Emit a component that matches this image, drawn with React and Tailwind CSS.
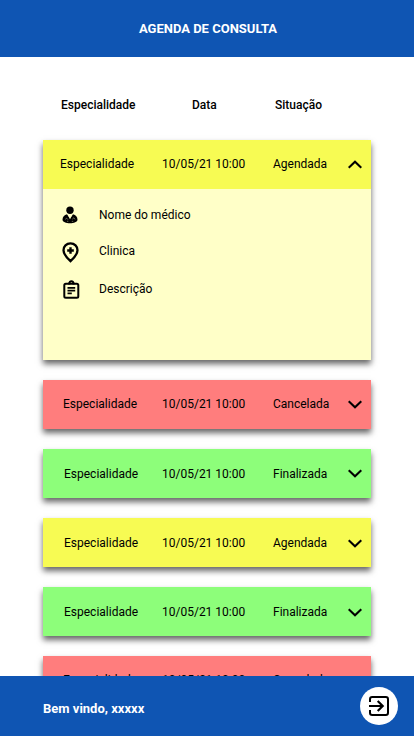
const tones = {
  yellow: "bg-[#f7fb53]",
  red: "bg-[#ff7d7d]",
  green: "bg-[#8dfe7a]",
};

const appointments = [
  { status: "Agendada", tone: "yellow", pad: "pl-[17px] pb-0.5", date: "10/05/21 10:00", chevron: "mt-0.5", open: true },
  { status: "Cancelada", tone: "red", pad: "pl-5 pb-0.5", date: "10/05/21 10:00", chevron: "mt-0.5" },
  { status: "Finalizada", tone: "green", pad: "pl-[21px]", date: "10/05/21 10:00", chevron: "mb-px" },
  { status: "Agendada", tone: "yellow", pad: "pl-[21px]", date: "10/05/21 10:00", chevron: "mt-px" },
  { status: "Finalizada", tone: "green", pad: "pl-[21px]", date: "10/05/21 10:00", chevron: "mt-px" },
  { status: "Cancelada", tone: "red", pad: "pl-5 pb-0.5", date: "10/05/21 10:00", chevron: "mt-1" },
];

function Chevron({ up, className = "" }) {
  return (
    <svg width="14" height="9" viewBox="0 0 14 9" fill="none" stroke="#000" strokeWidth="2.1" className={"shrink-0 " + className}>
      <path d={up ? "M0.7 7.8L7 1.7L13.3 7.8" : "M0.7 1.2L7 7.3L13.3 1.2"} />
    </svg>
  );
}

function DoctorIcon() {
  return (
    <svg width="16" height="18" viewBox="0 0 16 18">
      <circle cx="8" cy="4.2" r="3.7" fill="#000" />
      <path d="M5 8.3C2.200 9.200.5 11 .5 13.800c0 2.300 3.600 3.500 7.500 3.500s7.500-1.200 7.500-3.500c0-2.800-1.700-4.600-4.500-5.500L8 12.500Z" fill="#000" />
      <path d="M5.600 8.400L8 13.200L10.400 8.400L8.900 9.300L8.500 11.200H7.500L7.100 9.300Z" fill="#ffffc8" />
      <path d="M3.200 13.400l1.500-1.200 1.300 1.500M10.300 13.200l1.500-1.400 1.200 1.600M5 15.300h1.300M9.800 15.400h1.400" stroke="#ffffc8" strokeWidth=".4" fill="none" />
    </svg>
  );
}

function ClinicIcon() {
  return (
    <svg width="17" height="21" viewBox="0 0 17 21" fill="none" stroke="#000" strokeWidth="2.3">
      <path d="M8.500 1.400C4.400 1.400 1.500 4.400 1.500 8.200c0 4.200 3.200 7.500 7 11 3.800-3.500 7-6.800 7-11 0-3.800-2.900-6.800-7-6.800Z" />
      <path d="M8.500 5.200v6.600M5.200 8.500h6.600" strokeWidth="2.400" />
    </svg>
  );
}

function ClipboardIcon() {
  return (
    <svg width="17" height="19" viewBox="0 0 17 19" fill="none" stroke="#000" strokeWidth="2" className="ml-px">
      <rect x="1.300" y="3.800" width="14" height="14" rx="1.500" />
      <path d="M5.200 3.400h1.200c.1-1.300.9-2.100 2-2.100s1.900.8 2 2.100h1.200" />
      <path d="M4.500 7.800h7.700M4.500 10.600h7.700M4.500 13.400h4.300" strokeWidth="1.700" />
    </svg>
  );
}

function ExitIcon() {
  return (
    <svg width="20" height="20" viewBox="0 0 20 20" fill="none" stroke="#000" strokeWidth="2">
      <path d="M1 6V3.200Q1 1 3.200 1H16.800Q19 1 19 3.200V16.800Q19 19 16.800 19H3.200Q1 19 1 16.800V14" />
      <path d="M0 10H13.500M8.700 5L13.700 10L8.700 15" strokeWidth="2.200" />
    </svg>
  );
}

function Detail({ icon, children, className, label = "" }) {
  return (
    <div className={"flex items-center " + className}>
      <div className="flex w-[37px] shrink-0">{icon}</div>
      <span className={label}>{children}</span>
    </div>
  );
}

function Card({ item }) {
  return (
    <article className="w-[328px] shrink-0 shadow-[0_4px_6px_rgba(0,0,0,0.6)]">
      <div className={"flex h-[49px] items-center pr-[9px] " + item.pad + " " + tones[item.tone]}>
        <span className="flex-1">Especialidade</span>
        <span className="w-[111px]">{item.date}</span>
        <span className="w-[75px]">{item.status}</span>
        <Chevron up={item.open} className={item.chevron} />
      </div>
      {item.open && (
        <div className="h-[171px] bg-[#ffffc8] pl-[19px] pt-4">
          <Detail className="h-[19px]" icon={<DoctorIcon />}>Nome do médico</Detail>
          <Detail className="mt-[18px] h-[21px]" label="mb-[3px]" icon={<ClinicIcon />}>Clinica</Detail>
          <Detail className="mt-[17px] h-[19px]" label="mb-px" icon={<ClipboardIcon />}>Descrição</Detail>
        </div>
      )}
    </article>
  );
}

export default function App() {
  return (
    <div className="flex h-[736px] w-[414px] flex-col overflow-hidden bg-white font-['Roboto',sans-serif] text-[12px] leading-4 text-black">
      <header className="flex h-[57px] shrink-0 items-center justify-center bg-[#0f55b3] pl-[2px] text-[13px] font-bold text-white">
        <h1>AGENDA DE CONSULTA</h1>
      </header>
      <main className="flex min-h-0 flex-1 flex-col overflow-hidden px-[43px]">
        <div className="mt-10 flex h-4 shrink-0 pl-[18px] font-medium">
          <span className="w-[131px]">Especialidade</span>
          <span className="w-[83px]">Data</span>
          <span>Situação</span>
        </div>
        <div className="mt-[27px] flex flex-col gap-5">
          {appointments.map((item, i) => (
            <Card key={i} item={item} />
          ))}
        </div>
      </main>
      <footer className="z-10 flex h-[60px] shrink-0 items-center justify-between bg-[#0f55b3] pl-[43px] pr-4 text-white">
        <span className="pt-1.5 text-[13px] font-bold">Bem vindo, xxxxx</span>
        <button className="flex size-[38px] items-center justify-center rounded-full bg-white" aria-label="Sair">
          <ExitIcon />
        </button>
      </footer>
    </div>
  );
}
